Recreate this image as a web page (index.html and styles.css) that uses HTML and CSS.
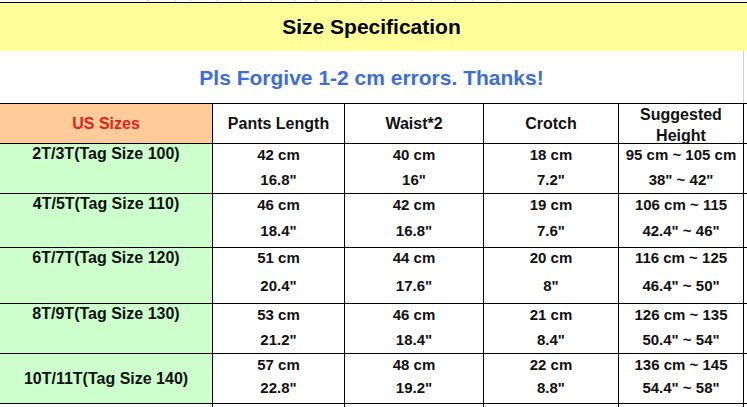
FILE: index.html
```html
<!DOCTYPE html>
<html lang="en">
<head>
<meta charset="utf-8">
<title>Size Specification</title>
<link rel="stylesheet" href="styles.css">
</head>
<body>
<div class="sheet">
  <div class="strip"><span></span><span></span><span></span><span></span><span></span><span></span><span></span><span></span><span></span><span></span><span></span><span></span><span></span><span></span><span></span><span></span></div>
  <div class="title"><span>Size Specification</span></div>
  <div class="notice"><div class="notice-text">Pls Forgive 1-2 cm errors. Thanks!</div></div>

  <div class="table">
    <div class="row head">
      <div class="c us">US Sizes</div>
      <div class="c">Pants Length</div>
      <div class="c">Waist*2</div>
      <div class="c">Crotch</div>
      <div class="c two">Suggested<br>Height</div>
      <div class="c end"></div>
    </div>
    <div class="row r1">
      <div class="c size">2T/3T(Tag Size 100)</div>
      <div class="c"><span>42 cm</span><span>16.8&quot;</span></div>
      <div class="c"><span>40 cm</span><span>16&quot;</span></div>
      <div class="c"><span>18 cm</span><span>7.2&quot;</span></div>
      <div class="c"><span>95 cm ~ 105 cm</span><span>38&quot; ~ 42&quot;</span></div>
      <div class="c end"></div>
    </div>
    <div class="row r2">
      <div class="c size">4T/5T(Tag Size 110)</div>
      <div class="c"><span>46 cm</span><span>18.4&quot;</span></div>
      <div class="c"><span>42 cm</span><span>16.8&quot;</span></div>
      <div class="c"><span>19 cm</span><span>7.6&quot;</span></div>
      <div class="c"><span>106 cm ~ 115</span><span>42.4&quot; ~ 46&quot;</span></div>
      <div class="c end"></div>
    </div>
    <div class="row r3">
      <div class="c size">6T/7T(Tag Size 120)</div>
      <div class="c"><span>51 cm</span><span>20.4&quot;</span></div>
      <div class="c"><span>44 cm</span><span>17.6&quot;</span></div>
      <div class="c"><span>20 cm</span><span>8&quot;</span></div>
      <div class="c"><span>116 cm ~ 125</span><span>46.4&quot; ~ 50&quot;</span></div>
      <div class="c end"></div>
    </div>
    <div class="row r4">
      <div class="c size">8T/9T(Tag Size 130)</div>
      <div class="c"><span>53 cm</span><span>21.2&quot;</span></div>
      <div class="c"><span>46 cm</span><span>18.4&quot;</span></div>
      <div class="c"><span>21 cm</span><span>8.4&quot;</span></div>
      <div class="c"><span>126 cm ~ 135</span><span>50.4&quot; ~ 54&quot;</span></div>
      <div class="c end"></div>
    </div>
    <div class="row r5">
      <div class="c size mid">10T/11T(Tag Size 140)</div>
      <div class="c"><span>57 cm</span><span>22.8&quot;</span></div>
      <div class="c"><span>48 cm</span><span>19.2&quot;</span></div>
      <div class="c"><span>22 cm</span><span>8.8&quot;</span></div>
      <div class="c"><span>136 cm ~ 145</span><span>54.4&quot; ~ 58&quot;</span></div>
      <div class="c end"></div>
    </div>
    <div class="row r6">
      <div class="c"></div>
      <div class="c"></div>
      <div class="c"></div>
      <div class="c"></div>
      <div class="c"></div>
      <div class="c end"></div>
    </div>
  </div>
</div>
</body>
</html>
```
FILE: styles.css
```css
* { box-sizing: border-box; }

body {
  margin: 0;
  background: #fff;
  font-family: "Liberation Sans", Arial, sans-serif;
  font-weight: bold;
  color: #111;
}

.sheet {
  width: 747px;
  height: 407px;
  overflow: hidden;
}

.strip {
  height: 3px;
  border-bottom: 1px solid #000;
  display: grid;
  grid-template-columns: 148px 28px 15px 27px 23px 31px 23px 22px 21px 24px 20px 30px 20px 24px 17px 25px;
}
.strip span { border-right: 1px solid #d6d6d6; }

.title {
  height: 48px;
  background: #ffff99;
  display: flex;
  align-items: center;
  justify-content: center;
  padding-right: 4px;
  font-size: 21px;
  color: #000;
}

.notice {
  height: 52px;
  display: flex;
}
.notice-text {
  width: 744px;
  border-right: 1px solid #cfcfcf;
  display: flex;
  align-items: center;
  justify-content: center;
  padding-top: 1px;
  font-size: 21px;
  color: #3c6dd8;
}

.table { border-top: 1px solid #000; }

.row {
  display: grid;
  grid-template-columns: 213px 132px 139px 135px 125px 1fr;
}
.head { height: 40px; }
.r1 { height: 50px; }
.r2 { height: 54px; }
.r3 { height: 56px; }
.r4 { height: 50px; }
.r5 { height: 50px; }
.r6 { height: 20px; }

.c {
  border-right: 1px solid #000;
  border-bottom: 1px solid #000;
  display: flex;
  flex-direction: column;
  align-items: center;
  font-size: 15px;
  line-height: 18px;
  padding-top: 2px;
  white-space: nowrap;
}
.c.end { border-right: none; }
.r6 .c { border-bottom: none; }

.head .c {
  font-size: 16px;
  line-height: 20px;
  justify-content: center;
  padding-top: 0;
  overflow: hidden;
}
.head .c.two {
  line-height: 21px;
  justify-content: flex-start;
  padding-top: 0;
  text-align: center;
}

.us {
  background: #ffcc99;
  color: #e2211c;
}
.c.size {
  background: #ccffcc;
  font-size: 16px;
  padding-top: 1px;
}
.c.mid { justify-content: center; padding-top: 0; }

.r1 .c { gap: 7px; }
.r2 .c { gap: 8px; }
.r3 .c { gap: 10px; padding-top: 1px; }
.r4 .c { gap: 7px; }
.r5 .c { gap: 5px; }
```
